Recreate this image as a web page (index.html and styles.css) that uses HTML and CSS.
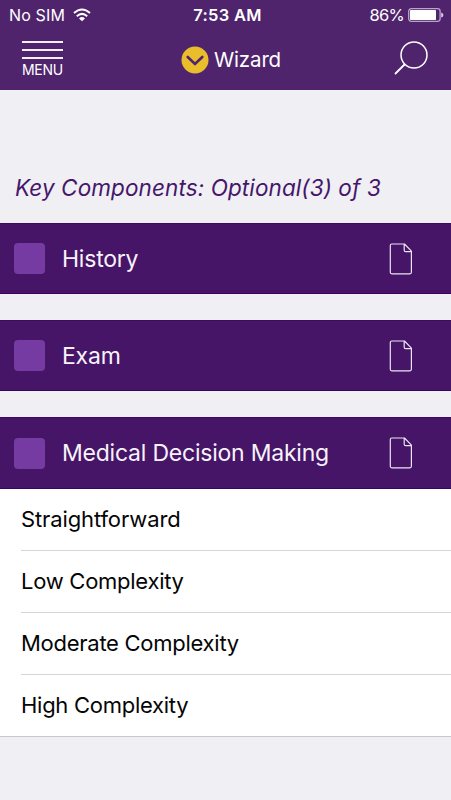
FILE: index.html
```html
<!DOCTYPE html>
<html lang="en">
<head>
<meta charset="utf-8">
<title>Wizard</title>
<link rel="stylesheet" href="styles.css">
</head>
<body>
<svg class="defs" width="0" height="0">
  <symbol id="doc" viewBox="0 0 24 32">
    <path d="M2.8 1H15.5L22.4 8.2V29.3Q22.4 30.8 20.9 30.8H2.8Q1.3 30.8 1.3 29.3V2.5Q1.3 1 2.8 1ZM15.2 1V7.2Q15.2 8.7 16.7 8.7H22" fill="none" stroke="#ece4f2" stroke-width="1.2" stroke-linejoin="round"/>
  </symbol>
</svg>
<header class="top">
  <div class="status">
    <div class="carrier"><span class="sim">No SIM</span>
      <svg width="18" height="14" viewBox="0 0 18 14"><g fill="none" stroke="#fff" stroke-width="2"><path d="M1 5.1Q9-2.1 17 5.1"/><path d="M3.8 8.2Q9 3.6 14.2 8.2"/></g><path d="M6 10.4Q9 7.8 12 10.4L9 13.3Z" fill="#fff"/></svg>
    </div>
    <time class="clock">7:53 AM</time>
    <div class="power"><span class="percent">86%</span>
      <svg width="36" height="14" viewBox="0 0 36 14"><rect x=".7" y=".7" width="31.4" height="12.6" rx="2.5" fill="none" stroke="#b9a3cb" stroke-width="1.3"/><rect x="2" y="2" width="26" height="10" rx=".8" fill="#fff"/><path d="M33.2 4.5Q35.4 5 35.4 7T33.2 9.5Z" fill="#d8cbe2"/></svg>
    </div>
  </div>
  <nav class="nav">
    <div class="menu"><i></i><i></i><i></i><span class="menu-label">MENU</span></div>
    <div class="title">
      <svg width="28" height="28" viewBox="0 0 28 28"><circle cx="14" cy="14" r="13.5" fill="#e9bd2b"/><path d="M6.7 11L14 18L21.3 11" fill="none" stroke="#4f246d" stroke-width="2.6" stroke-linecap="round"/></svg>
      <span class="title-label">Wizard</span>
    </div>
    <svg class="search" width="36" height="36" viewBox="0 0 36 36"><g fill="none" stroke="#fff" stroke-linecap="round"><circle cx="21" cy="15" r="13" stroke-width="1.5"/><path d="M11.5 24.5L2.5 33.5" stroke-width="1.8"/></g></svg>
  </nav>
</header>
<main>
  <h1 class="heading"><span class="heading-text">Key Components: Optional(3) of 3</span></h1>
  <section class="bar"><span class="box"></span><span class="label">History</span><svg class="doc" width="24" height="32"><use href="#doc"/></svg></section>
  <section class="bar"><span class="box"></span><span class="label">Exam</span><svg class="doc" width="24" height="32"><use href="#doc"/></svg></section>
  <section class="bar open"><span class="box"></span><span class="label">Medical Decision Making</span><svg class="doc" width="24" height="32"><use href="#doc"/></svg></section>
  <ul class="options">
    <li><span class="straight">Straightforward</span></li>
    <li><span>Low Complexity</span></li>
    <li><span>Moderate Complexity</span></li>
    <li><span>High Complexity</span></li>
  </ul>
</main>
</body>
</html>
```
FILE: styles.css
```css
* { box-sizing: border-box; }
body { margin: 0; width: 451px; height: 800px; overflow: hidden; background: #efeff4; font-family: Inter, "Liberation Sans", sans-serif; white-space: nowrap; }
svg { display: block; flex: none; }
.defs { position: absolute; }
.top { height: 90px; background: #4f246d; color: #fff; }
.status { height: 29px; display: grid; grid-template-columns: 1fr auto 1fr; align-items: center; padding: 0 7px 0 9px; font-size: 16px; line-height: 20px; }
.carrier, .power { display: flex; align-items: center; }
.carrier { gap: 8px; }
.sim { letter-spacing: .15px; }
.power { justify-content: flex-end; gap: 4px; }
.clock { font-weight: 600; font-size: 16.5px; letter-spacing: .3px; padding-left: 2px; }
.percent { font-size: 16.5px; letter-spacing: -.7px; }
.nav { height: 61px; display: grid; grid-template-columns: 1fr auto 1fr; padding: 0 21px 0 22px; }
.menu { width: 41px; padding-top: 12px; display: flex; flex-direction: column; gap: 6px; }
.menu i { height: 2px; background: #f4eff7; }
.menu-label { font-size: 14px; line-height: 16px; letter-spacing: -.3px; margin-top: -3px; }
.title { display: flex; align-items: center; gap: 5px; padding-left: 10px; font-size: 20.5px; letter-spacing: -.15px; }
.search { justify-self: end; margin: 11px 1px 0 0; }
.heading { height: 133px; margin: 0; padding: 84px 0 0 15px; font-size: 22.5px; line-height: 28px; font-weight: 400; font-style: italic; letter-spacing: .1px; color: #46166b; }
.bar { height: 71px; margin-bottom: 26px; padding: 0 38px 0 14px; display: flex; align-items: center; background: #461567; border-top: 1px solid #3d0b60; border-bottom: 1px solid #35065a; color: #f7f3fa; font-size: 23px; letter-spacing: -.22px; }
.bar.open { height: 72px; margin-bottom: 0; }
.box { width: 31px; height: 31px; border-radius: 4px; background: #763ba2; margin-right: 17px; }
.doc { margin-left: auto; }
.options { margin: 0; padding: 0 0 0 21px; list-style: none; background: #fff; border-bottom: 1px solid #c9c8cd; color: #050505; font-size: 22px; letter-spacing: -.27px; }
.options li { height: 62px; padding-bottom: 2px; display: flex; align-items: center; border-bottom: 1px solid #d5d4d8; }
.options li:last-child { height: 61px; border: 0; }
.straight { letter-spacing: -.12px; }
```
